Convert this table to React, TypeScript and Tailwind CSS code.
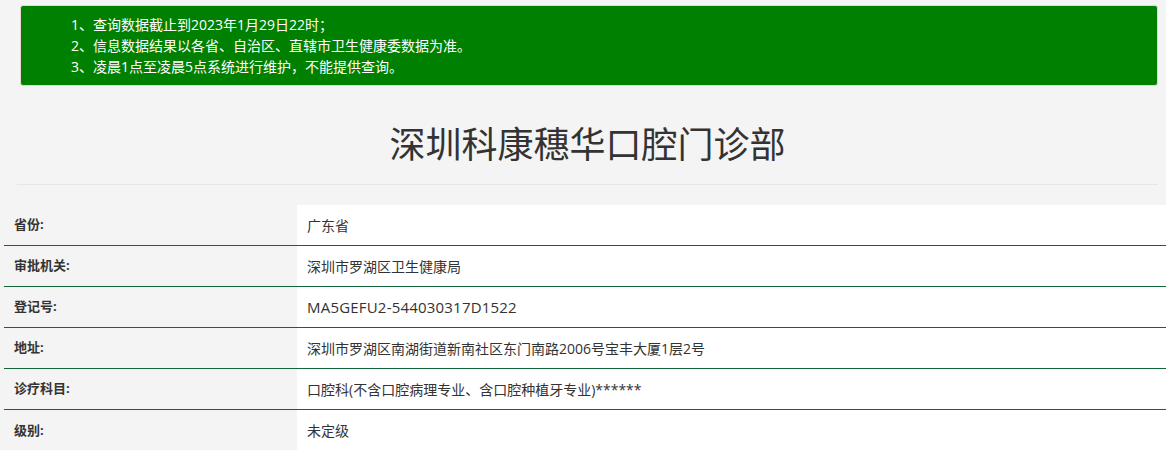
const rows: [string, string][] = [
  ["省份:", "广东省"],
  ["审批机关:", "深圳市罗湖区卫生健康局"],
  ["登记号:", "MA5GEFU2-544030317D1522"],
  ["地址:", "深圳市罗湖区南湖街道新南社区东门南路2006号宝丰大厦1层2号"],
  ["诊疗科目:", "口腔科(不含口腔病理专业、含口腔种植牙专业)******"],
  ["级别:", "未定级"],
];

export default function App() {
  return (
    <main
      className="min-h-[450px] bg-[#f4f4f4] text-[#333] pt-[5px]"
      style={{ fontFamily: '"Open Sans", "Noto Sans CJK SC", sans-serif' }}
    >
      <div className="ml-[20px] mr-[8px] rounded-[3px] border border-[#e8d6d6] bg-[#008000] pl-[50px] py-[8px] text-[14px] leading-[21px] text-white">
        <p>1、查询数据截止到2023年1月29日22时；</p>
        <p>2、信息数据结果以各省、自治区、直辖市卫生健康委数据为准。</p>
        <p>3、凌晨1点至凌晨5点系统进行维护，不能提供查询。</p>
      </div>

      <div className="ml-[17px] mr-[8px] border-b border-[#e6e6e6] pt-[33px] pb-[13px] text-center">
        <h1 className="text-[36px] leading-[52px] text-[#333]">深圳科康穗华口腔门诊部</h1>
      </div>

      <div className="ml-[4px] mt-[20px]">
        {rows.map(([label, value], i) => (
          <div
            key={label}
            className={
              i < rows.length - 1
                ? "flex h-[41px] border-b border-[#11633a]"
                : "flex h-[41px]"
            }
          >
            <div className="flex w-[293px] items-center pl-[10px] text-[13px] font-bold">
              {label}
            </div>
            <div className="flex flex-1 items-center bg-white pl-[10px] text-[14px]">
              {/* 登记号 is set a touch larger in the original */}
              {label === "登记号:" ? (
                <span className="text-[15px] tracking-[0.2px]">{value}</span>
              ) : (
                value
              )}
            </div>
          </div>
        ))}
      </div>
    </main>
  );
}
